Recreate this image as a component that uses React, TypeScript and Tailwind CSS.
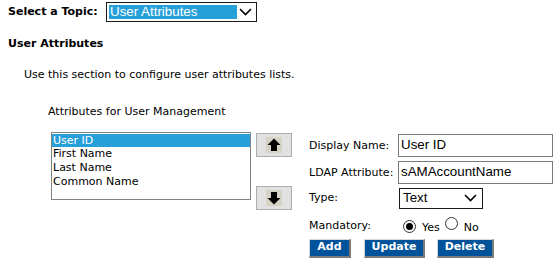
import React from "react";

const verdana = { fontFamily: '"DejaVu Sans", Verdana, sans-serif' };

function Arrow({ dir }: { dir: "up" | "down" }) {
  return (
    <svg width="16" height="16" viewBox="0 0 16 16">
      <rect x="0" y="0" width="16" height="16" fill="#d6d2c6" />
      {dir === "up" ? (
        <path d="M8 1.5 L14.5 8 L11 8 L11 14 L5 14 L5 8 L1.5 8 Z" fill="#000" />
      ) : (
        <path d="M8 14.5 L14.5 8 L11 8 L11 2 L5 2 L5 8 L1.5 8 Z" fill="#000" />
      )}
    </svg>
  );
}

function Chevron() {
  return (
    <svg width="13" height="8" viewBox="0 0 13 8">
      <path d="M1 1 L6.5 6.5 L12 1" fill="none" stroke="#000" strokeWidth="1.6" />
    </svg>
  );
}

function Radio({ checked }: { checked?: boolean }) {
  return (
    <span className="inline-flex h-[13px] w-[13px] items-center justify-center rounded-full border border-[#333] bg-white">
      {checked && <span className="h-[7px] w-[7px] rounded-full bg-[#000]" />}
    </span>
  );
}

function BlueButton({ label, w }: { label: string; w: string }) {
  return (
    <div
      className={`flex h-[19px] ${w} items-center justify-center border-t border-l border-t-[#d8d8d8] border-l-[#d8d8d8] border-r-2 border-b-2 border-r-[#7a7a7a] border-b-[#7a7a7a] bg-[#00539b] text-[11px] font-bold text-white`}
      style={verdana}
    >
      {label}
    </div>
  );
}

export default function App() {
  return (
    <div className="relative h-[263px] w-[554px] overflow-hidden bg-white text-[11px] text-black" style={verdana}>
      {/* Topic selector */}
      <div className="flex items-center pl-[8px] pt-[2px]">
        <span className="w-[98px] font-bold">Select a Topic:</span>
        <div className="flex h-[20px] w-[151px] items-center border border-[#1a1a1a] bg-white p-[2px]">
          <div
            className="flex h-full w-[128px] items-center bg-[#27a0da] pl-[1px] text-[13.33px] text-white"
            style={{ fontFamily: '"Liberation Sans", Arial, sans-serif' }}
          >
            User Attributes
          </div>
          <div className="flex flex-1 items-center justify-center">
            <Chevron />
          </div>
        </div>
      </div>

      <div className="mt-[14px] pl-[8px] font-bold">User Attributes</div>

      <div className="mt-[14px] pl-[24px]">Use this section to configure user attributes lists.</div>

      <div className="mt-[21px] pl-[48px]">Attributes for User Management</div>

      <div className="mt-[11px] flex pl-[51px]">
        {/* List box */}
        <div className="h-[68px] w-[200px] border border-[#828282] bg-white pt-[1px] leading-[13.7px]">
          <div className="bg-[#27a0da] pl-[1px] text-white">User ID</div>
          <div className="pl-[1px]">First Name</div>
          <div className="pl-[1px]">Last Name</div>
          <div className="pl-[1px]">Common Name</div>
        </div>

        {/* Move buttons */}
        <div className="ml-[5px] flex flex-col">
          <div className="mt-[1px] flex h-[24px] w-[36px] items-center justify-center border border-[#adadad] bg-[#e1e1e1]">
            <Arrow dir="up" />
          </div>
          <div className="mt-[29px] flex h-[24px] w-[36px] items-center justify-center border border-[#adadad] bg-[#e1e1e1]">
            <Arrow dir="down" />
          </div>
        </div>

        {/* Form */}
        <div className="ml-[17px] mt-[2px] flex flex-col">
          <div className="flex h-[23px] items-center">
            <span className="w-[89px] pt-[2px]">Display Name:</span>
            <div
              className="flex h-[23px] w-[155px] items-center border border-[#7a7a7a] pl-[2px] text-[13.33px]"
              style={{ fontFamily: '"Liberation Sans", Arial, sans-serif' }}
            >
              User ID
            </div>
          </div>
          <div className="mt-[4px] flex h-[23px] items-center">
            <span className="w-[89px] pt-[2px]">LDAP Attribute:</span>
            <div
              className="flex h-[23px] w-[155px] items-center border border-[#7a7a7a] pl-[2px] text-[13.33px]"
              style={{ fontFamily: '"Liberation Sans", Arial, sans-serif' }}
            >
              sAMAccountName
            </div>
          </div>
          <div className="mt-[4px] flex h-[21px] items-center">
            <span className="w-[90px]">Type:</span>
            <div
              className="flex h-[21px] w-[84px] items-center border border-[#1a1a1a] pl-[3px] text-[13.33px]"
              style={{ fontFamily: '"Liberation Sans", Arial, sans-serif' }}
            >
              <span className="flex-1">Text</span>
              <span className="pr-[5px]">
                <Chevron />
              </span>
            </div>
          </div>
          <div className="mt-[10px] flex h-[16px] items-center">
            <span className="w-[94px]">Mandatory:</span>
            <Radio checked />
            <span className="ml-[6px] mt-[3px]">Yes</span>
            <span className="ml-[5px]">
              <Radio />
            </span>
            <span className="ml-[6px] mt-[3px]">No</span>
          </div>
          <div className="mt-[4px] flex">
            <BlueButton label="Add" w="w-[42px]" />
            <div className="ml-[13px]">
              <BlueButton label="Update" w="w-[61px]" />
            </div>
            <div className="ml-[12px]">
              <BlueButton label="Delete" w="w-[57px]" />
            </div>
          </div>
        </div>
      </div>
    </div>
  );
}
